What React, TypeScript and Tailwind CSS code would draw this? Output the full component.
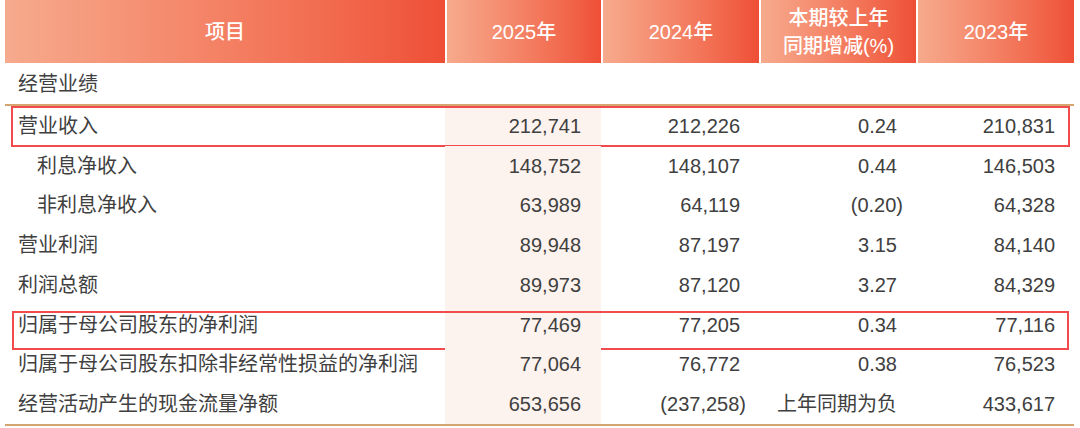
import React from 'react';

type Row = {
  label: string;
  indent?: boolean;
  v2025: string;
  v2024: string;
  change: string;
  v2023: string;
  boxed?: 'first' | 'second';
};

const rows: Row[] = [
  { label: '营业收入', v2025: '212,741', v2024: '212,226', change: '0.24', v2023: '210,831', boxed: 'first' },
  { label: '利息净收入', indent: true, v2025: '148,752', v2024: '148,107', change: '0.44', v2023: '146,503' },
  { label: '非利息净收入', indent: true, v2025: '63,989', v2024: '64,119', change: '(0.20)', v2023: '64,328' },
  { label: '营业利润', v2025: '89,948', v2024: '87,197', change: '3.15', v2023: '84,140' },
  { label: '利润总额', v2025: '89,973', v2024: '87,120', change: '3.27', v2023: '84,329' },
  { label: '归属于母公司股东的净利润', v2025: '77,469', v2024: '77,205', change: '0.34', v2023: '77,116', boxed: 'second' },
  { label: '归属于母公司股东扣除非经常性损益的净利润', v2025: '77,064', v2024: '76,772', change: '0.38', v2023: '76,523' },
  { label: '经营活动产生的现金流量净额', v2025: '653,656', v2024: '(237,258)', change: '上年同期为负', v2023: '433,617' },
];

const grid = 'grid grid-cols-[440px_154px_156px_155px_156px] gap-x-[2px]';
const headCell =
  'flex items-center justify-center bg-gradient-to-r from-[#f6aa8d] to-[#ee4f36] text-white text-[20px] font-medium';

// negative numbers in brackets: the closing ")" hangs past the column edge
const Num: React.FC<{ value: string }> = ({ value }) => {
  if (value.startsWith('(') && value.endsWith(')')) {
    return (
      <span>
        {value.slice(0, -1)}
        <span className="-mr-[6px]">)</span>
      </span>
    );
  }
  return <span>{value}</span>;
};

const App: React.FC = () => {
  return (
    <div
      className="w-[1080px] h-[428px] bg-white pl-[5px] pr-[6px] text-[#404040] overflow-hidden"
      style={{ fontFamily: '"Liberation Sans", "Noto Sans CJK SC", sans-serif' }}
    >
      <div className={`${grid} h-[63px]`}>
        <div className={headCell}>项目</div>
        <div className={headCell}>2025年</div>
        <div className={headCell}>2024年</div>
        <div className={`${headCell} flex-col leading-[28px]`}>
          <span>本期较上年</span>
          <span>同期增减(%)</span>
        </div>
        <div className={headCell}>2023年</div>
      </div>

      <div className="h-[41px] flex items-center pl-[13px] text-[20px]">经营业绩</div>
      <div className="h-[2px] bg-[#d5a56f]" />

      {rows.map((r) => (
        <div key={r.label} className={`${grid} relative h-[39.75px] text-[20px]`}>
          <div className={`flex items-center ${r.indent ? 'pl-[32px]' : 'pl-[13px]'}`}>{r.label}</div>
          <div className="flex items-center justify-end pr-[20px] bg-[#fdf3ee] -ml-[2px] pl-[2px]">
            <Num value={r.v2025} />
          </div>
          <div className="flex items-center justify-end pr-[19px]">
            <Num value={r.v2024} />
          </div>
          <div className="flex items-center justify-end pr-[19px]">
            <Num value={r.change} />
          </div>
          <div className="flex items-center justify-end pr-[19px]">
            <Num value={r.v2023} />
          </div>
          {r.boxed === 'first' && (
            <div className="absolute left-[6px] right-[4px] top-0 -bottom-[1px] border-[2.5px] border-[#f24b4d] pointer-events-none" />
          )}
          {r.boxed === 'second' && (
            <div className="absolute left-[7px] right-[5px] top-[6px] -bottom-[5px] border-[2.5px] border-[#f24b4d] pointer-events-none" />
          )}
        </div>
      ))}

      <div className="h-[2px] bg-[#d5a56f]" />
    </div>
  );
};

export default App;
